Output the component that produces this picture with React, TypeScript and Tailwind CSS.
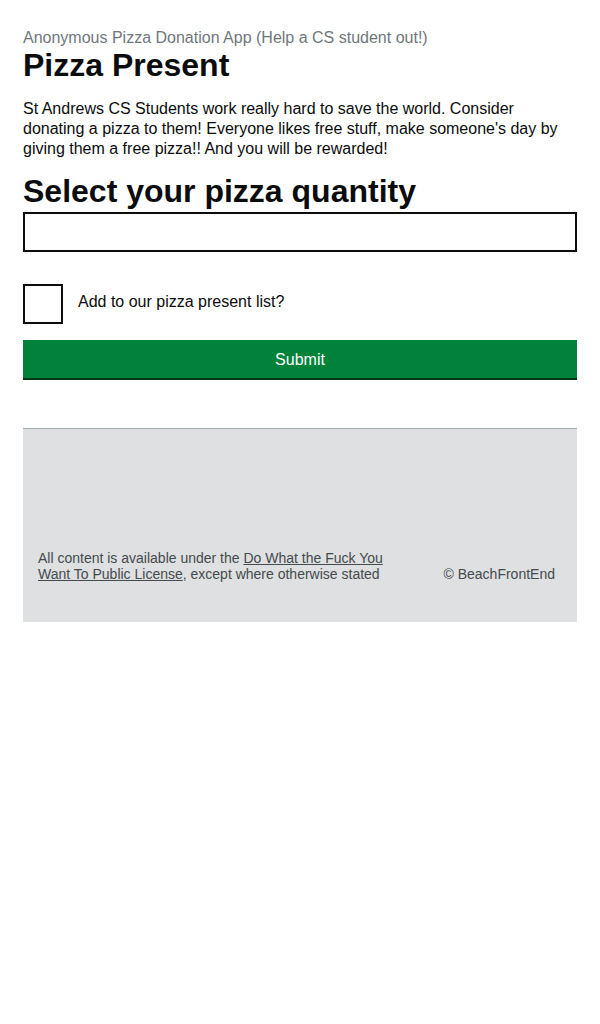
import React from "react";

export default function App() {
  return (
    <div className="min-h-[1024px] bg-white text-[#0b0c0c]" style={{ fontFamily: '"Liberation Sans", Arial, sans-serif' }}>
      <div className="mx-[23px] pt-[28px]">
        <div className="text-[16px] leading-[20px] text-[#6f777b]">Anonymous Pizza Donation App (Help a CS student out!)</div>
        <h1 className="text-[32px] leading-[34px] font-bold">Pizza Present</h1>
        <p className="mt-[17px] text-[16px] leading-[20px]">
          St Andrews CS Students work really hard to save the world. Consider donating a pizza to them! Everyone likes free stuff, make someone's day by giving them a free pizza!! And you will be rewarded!
        </p>
        <h2 className="mt-[12px] text-[32px] leading-[40px] font-bold">Select your pizza quantity</h2>
        <input type="text" className="mt-[1px] block h-[40px] w-full border-2 border-[#0b0c0c] bg-white px-[5px] text-[16px] outline-none" />
        <label className="mt-[32px] flex items-center">
          <span className="block h-[40px] w-[40px] shrink-0 border-2 border-[#0b0c0c] bg-white" />
          <span className="ml-[15px] pb-[4px] text-[16px] leading-[20px]">Add to our pizza present list?</span>
        </label>
        <button className="mt-[16px] block h-[38px] w-full bg-[#00823b] pt-[2px] text-[16px] leading-[20px] text-white shadow-[0_2px_0_#003618]">
          Submit
        </button>
        <footer className="mt-[50px] flex h-[194px] items-end justify-between border-t border-[#a1acb2] bg-[#dee0e2] pb-[40px] pl-[15px] pr-[22px] text-[14px] leading-[16px] text-[#454a4c]">
          <div className="w-[370px]">
            All content is available under the{" "}
            <a href="#" className="underline text-[#454a4c]">Do What the Fuck You Want To Public License</a>, except where otherwise stated
          </div>
          <div>© BeachFrontEnd</div>
        </footer>
      </div>
    </div>
  );
}
